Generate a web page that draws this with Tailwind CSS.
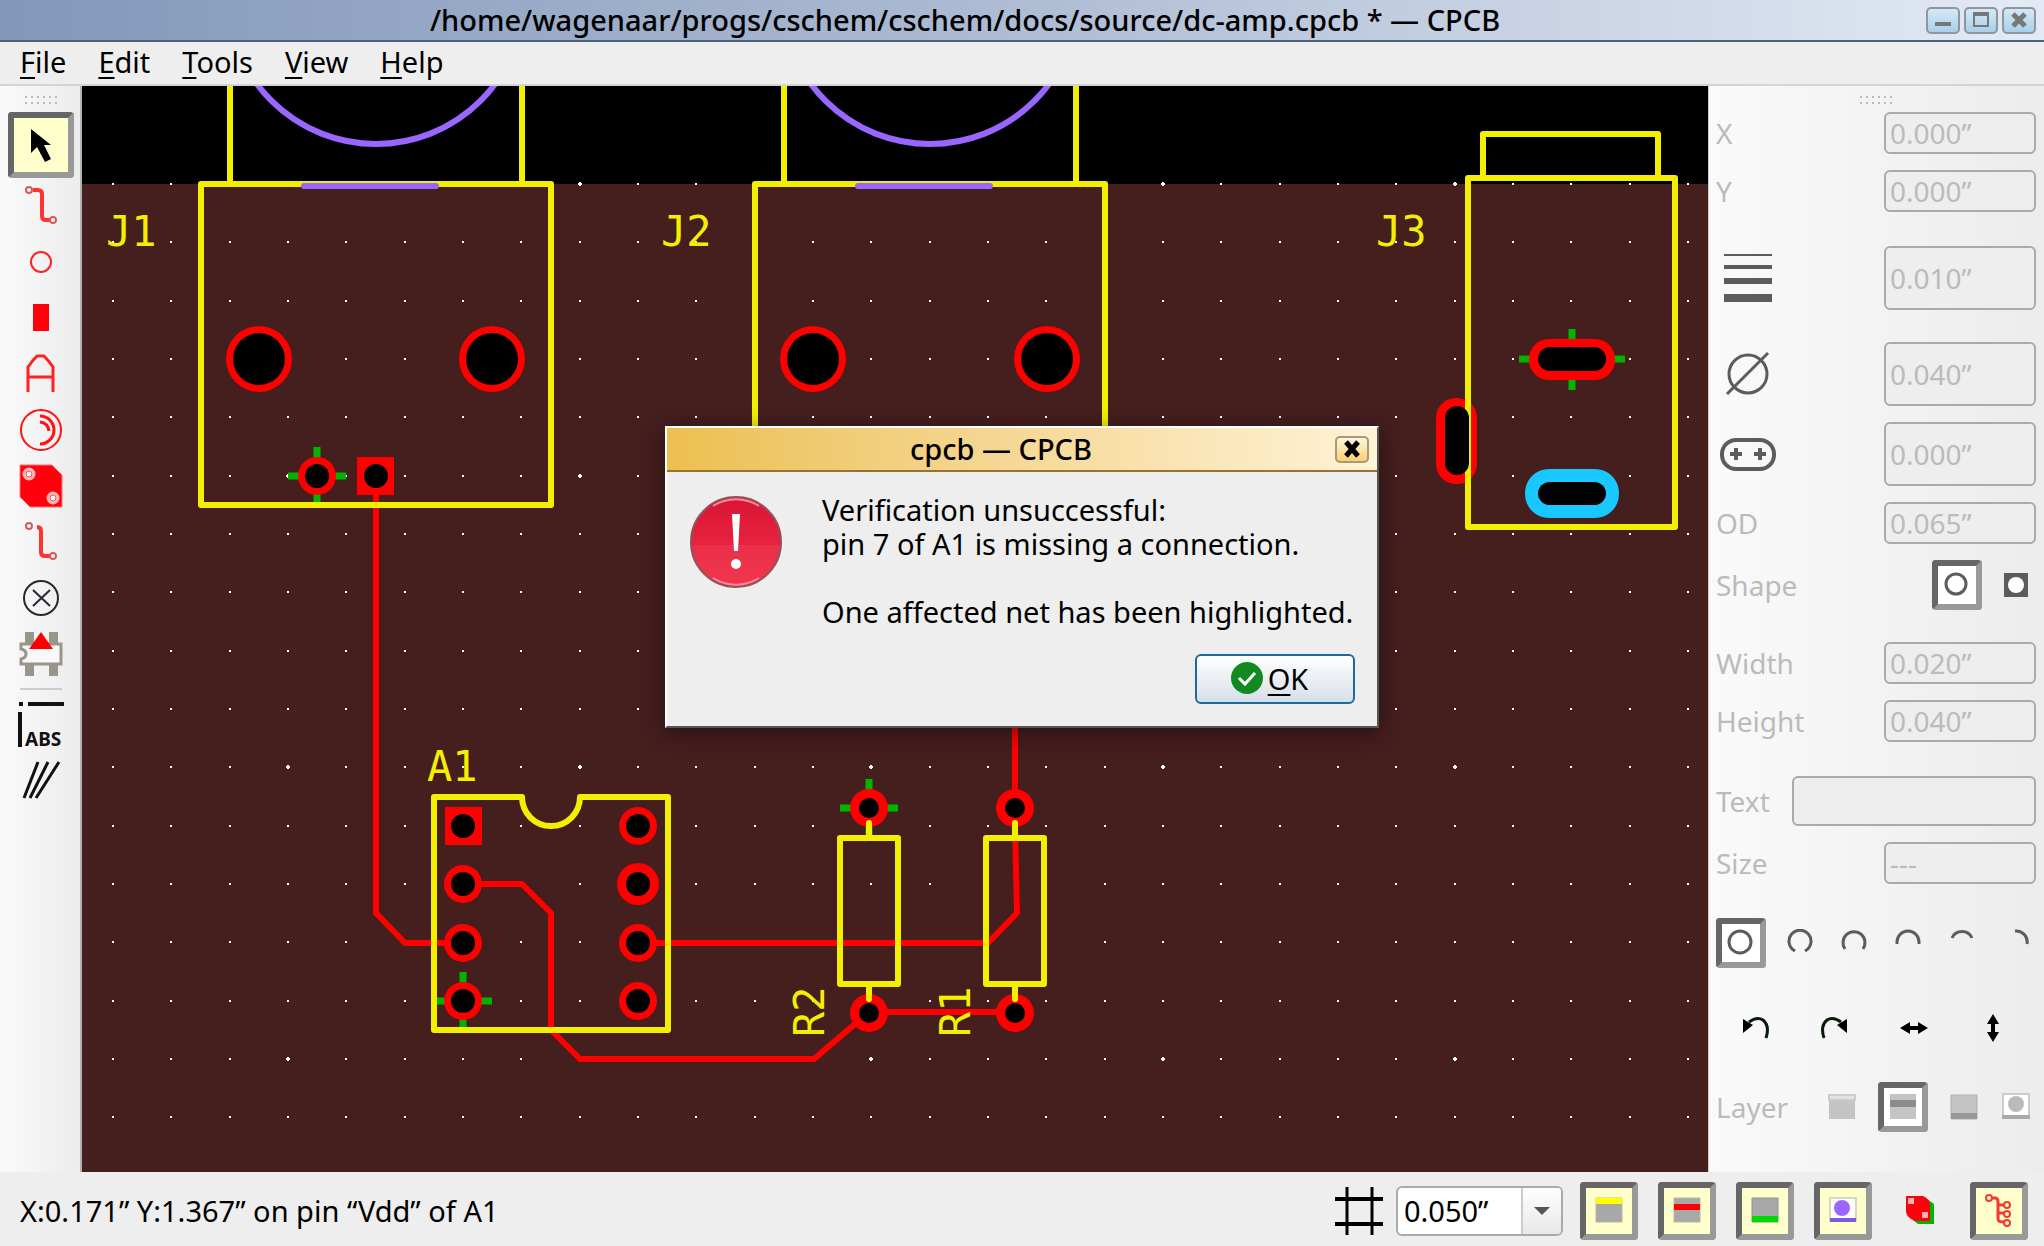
<!DOCTYPE html>
<html lang="en">
<head>
<meta charset="utf-8">
<title>dc-amp.cpcb * — CPCB</title>
<script src="https://cdn.jsdelivr.net/npm/@tailwindcss/browser@4"></script>
</head>
<body class="relative flex h-screen flex-col overflow-hidden bg-[#eeeeee] font-['Noto_Sans',sans-serif] text-[29px] leading-[34px] text-black">

<!-- Title bar -->
<header class="relative flex h-[42px] shrink-0 items-center justify-end gap-1 border-b-2 border-[#4f6078] bg-linear-to-r from-[#8298b9] via-[#aebcd4] to-[#e4eaf5] pr-2">
  <h1 class="flex-1 pb-px pl-2 text-center font-medium whitespace-nowrap">/home/wagenaar/progs/cschem/cschem/docs/source/dc-amp.cpcb * — CPCB</h1>
  <button aria-label="Minimize" class="flex h-[27px] w-[34px] items-center justify-center rounded-[5px] border-2 border-[#8f979e] bg-linear-to-b from-[#d4e9f6] to-[#a9cfe9]"><svg width="20" height="18"><path d="M2 13h16" stroke="#777" stroke-width="4"/></svg></button>
  <button aria-label="Maximize" class="flex h-[27px] w-[34px] items-center justify-center rounded-[5px] border-2 border-[#8f979e] bg-linear-to-b from-[#d4e9f6] to-[#a9cfe9]"><svg width="20" height="18"><path d="M3 3h14v12H3z" fill="none" stroke="#777" stroke-width="2"/><path d="M2 3h16" stroke="#777" stroke-width="4"/></svg></button>
  <button aria-label="Close" class="flex h-[27px] w-[34px] items-center justify-center rounded-[5px] border-2 border-[#8f979e] bg-linear-to-b from-[#d4e9f6] to-[#a9cfe9]"><svg width="20" height="18"><path d="M4 3l12 12M16 3L4 15" stroke="#777" stroke-width="5"/></svg></button>
</header>

<!-- Menu bar -->
<nav class="flex h-[44px] shrink-0 items-center gap-8 border-b-2 border-[#d4d4d4] px-5 pb-[2px]">
  <a href="#file" class="underline-offset-4"><span class="underline decoration-2">F</span>ile</a>
  <a href="#edit" class="underline-offset-4"><span class="underline decoration-2">E</span>dit</a>
  <a href="#tools" class="underline-offset-4"><span class="underline decoration-2">T</span>ools</a>
  <a href="#view" class="underline-offset-4"><span class="underline decoration-2">V</span>iew</a>
  <a href="#help" class="underline-offset-4"><span class="underline decoration-2">H</span>elp</a>
</nav>

<div class="flex min-h-0 flex-1">

  <!-- Tool palette -->
  <aside class="flex w-[82px] shrink-0 flex-col items-center border-r-2 border-[#b4b4b4] bg-linear-to-r from-[#fafafa] to-[#ececec] pt-[10px] pl-px">
    <svg width="34" height="10" class="mb-[6px] shrink-0" fill="none" stroke="#bbb" stroke-width="2" stroke-dasharray="2 4"><path d="M1 1h32M1 7h32"/></svg>
    <button aria-label="Select" class="flex h-[66px] w-[66px] shrink-0 items-center justify-center rounded-[4px] border-6 border-t-[#666] border-r-[#999] border-b-[#999] border-l-[#666] bg-[#ffffcc]">
      <svg width="44" height="44"><path d="M12 6V30L18 24L26 39L32 36L25 22H32Z" fill="#000"/></svg>
    </button>
    <button aria-label="Trace" class="flex h-14 w-[66px] shrink-0 items-center justify-center"><svg width="44" height="44" fill="none"><path d="M14 6h5q4 0 4 4v22q0 4 4 4h4" stroke="#f33" stroke-width="4"/><circle cx="10" cy="6" r="3" stroke="#d06060" stroke-width="2"/><circle cx="34" cy="36" r="3" stroke="#d06060" stroke-width="2"/></svg></button>
    <button aria-label="Hole" class="flex h-14 w-[66px] shrink-0 items-center justify-center"><svg width="44" height="44"><circle cx="22" cy="22" r="10" fill="none" stroke="#f22" stroke-width="2"/></svg></button>
    <button aria-label="Pad" class="flex h-14 w-[66px] shrink-0 items-center justify-center"><svg width="44" height="44"><path d="M14 8h16v27H14z" fill="#ff000c"/></svg></button>
    <button aria-label="Text" class="flex h-14 w-[66px] shrink-0 items-center justify-center"><svg width="44" height="44"><path d="M9 40V15Q13 9 18 4H25Q30 9 34 15V40M9 25H34" fill="none" stroke="#f22" stroke-width="3"/></svg></button>
    <button aria-label="Arc" class="flex h-14 w-[66px] shrink-0 items-center justify-center"><svg width="44" height="44" fill="none" stroke="#f11" stroke-width="3"><circle cx="22" cy="22" r="20" stroke-width="2"/><path d="M21 8a14 14 0 0 1 0 28M21 14q8 1 9 9"/></svg></button>
    <button aria-label="Plane" class="flex h-14 w-[66px] shrink-0 items-center justify-center"><svg width="44" height="44"><path d="M1 1H33L43 11V43H11L1 33Z" fill="#ff000c" stroke="#f77" stroke-width="1"/><g fill="#fff" stroke="#ffb4b4" stroke-width="3"><circle cx="10" cy="10" r="5"/><circle cx="34" cy="34" r="5"/></g><g fill="#fff" stroke="#f44" stroke-width="1"><circle cx="10" cy="10" r="3"/><circle cx="34" cy="34" r="3"/></g></svg></button>
    <button aria-label="Pick up trace" class="flex h-14 w-[66px] shrink-0 items-center justify-center"><svg width="44" height="44" fill="none"><path d="M18 7q4 0 4 4v21q0 4 4 4h5" stroke="#f33" stroke-width="4"/><circle cx="10" cy="6" r="3" stroke="#d06060" stroke-width="2"/><circle cx="34" cy="36" r="3" stroke="#d06060" stroke-width="2"/></svg></button>
    <button aria-label="Not connected" class="flex h-14 w-[66px] shrink-0 items-center justify-center"><svg width="44" height="44" fill="none" stroke="#2c2630" stroke-width="2"><circle cx="22" cy="22" r="17"/><path d="M14 14l17 16M31 14L14 30"/></svg></button>
    <button aria-label="Place component" class="flex h-14 w-[66px] shrink-0 items-center justify-center"><svg width="44" height="44"><path d="M6 0h9v11H6zM30 0h9v11h-9zM6 33h9v11H6zM30 33h9v11h-9z" fill="#98958b"/><path d="M2 12H42V32H2V27Q7 26 7 22T2 17Z" fill="#f8f8f8" stroke="#98958b" stroke-width="3"/><path d="M22 0L34 17H10Z" fill="#f00"/></svg></button>
    <hr class="my-[6px] h-[2px] w-[42px] shrink-0 border-0 bg-[#ccc]">
    <button aria-label="Absolute coordinates" class="flex h-14 w-[66px] shrink-0 items-center justify-center"><svg width="54" height="48"><path d="M5 4H9M14 4H50M6 12V47" stroke="#111" stroke-width="4"/><text x="11" y="46" font-size="19" font-weight="700" fill="#111">ABS</text></svg></button>
    <button aria-label="Angle" class="flex h-14 w-[66px] shrink-0 items-center justify-center"><svg width="44" height="44"><path d="M5 40L19 4M11 40L29 4M17 40L40 4" stroke="#111" stroke-width="3"/></svg></button>
  </aside>

  <!-- Board -->
  <main class="min-w-0 flex-1 bg-[#451e1e]">
    <svg class="block h-full w-full" viewBox="82 86 1626 1086" preserveAspectRatio="xMinYMin slice" fill="none">
      <rect x="82" y="86" width="1626" height="98" fill="#000"/>
      <g id="grid" fill="#fff" shape-rendering="crispEdges"></g>
      <g stroke="#00b400" stroke-width="7">
        <path d="M288 476h58M317 447v58M434 1001h58M463 972v58M840 808h58M869 779v58M1519 359h106M1572 329v61"/>
      </g>
      <g stroke="#f00" stroke-width="6" stroke-linejoin="round">
        <path d="M376 476V913L405 943H463"/>
        <path d="M463 884H522L551 913V1030L580 1059H814L869 1012H1015"/>
        <path d="M638 943H988L1017 913L1015 826V600"/>
      </g>
      <g fill="#f00">
        <circle cx="259" cy="359" r="33"/><circle cx="492" cy="359" r="33"/>
        <circle cx="813" cy="359" r="33"/><circle cx="1047" cy="359" r="33"/>
        <circle cx="317" cy="476" r="19"/><rect x="357" y="457" width="37" height="38"/>
        <rect x="445" y="807" width="37" height="38"/>
        <circle cx="463" cy="884" r="19"/><circle cx="463" cy="943" r="19"/><circle cx="463" cy="1001" r="19"/>
        <circle cx="638" cy="826" r="19"/><circle cx="638" cy="884" r="21"/><circle cx="638" cy="943" r="19"/><circle cx="638" cy="1001" r="19"/>
        <circle cx="869" cy="808" r="19"/><circle cx="869" cy="1013" r="19"/><circle cx="1015" cy="808" r="19"/><circle cx="1015" cy="1013" r="19"/>
        <rect x="1529" y="339" width="86" height="41" rx="20"/>
        <rect x="1436" y="398" width="41" height="86" rx="20"/>
        <rect x="1525" y="469" width="94" height="49" rx="24" fill="#19c8ff"/>
      </g>
      <g stroke="#f2f000" stroke-width="6" stroke-linejoin="round" stroke-linecap="round">
        <path d="M230 80V184M522 80V184M201 184H551V505H201Z"/>
        <path d="M784 80V184M1076 80V184M755 184H1105V505H755Z"/>
        <path d="M1483 178V134H1658V178M1468 178H1675V527H1468Z"/>
        <path d="M434 797H522A29 29 0 0 0 580 797H668V1030H434Z"/>
        <path d="M840 838H898V984H840ZM986 838H1044V984H986Z"/>
        <path d="M869 823V838M869 984V999M1015 823V838M1015 984V999"/>
      </g>
      <g fill="#000">
        <circle cx="259" cy="359" r="26"/><circle cx="492" cy="359" r="26"/>
        <circle cx="813" cy="359" r="26"/><circle cx="1047" cy="359" r="26"/>
        <circle cx="317" cy="476" r="12"/><circle cx="376" cy="476" r="12"/>
        <circle cx="463" cy="826" r="12"/><circle cx="463" cy="884" r="12"/><circle cx="463" cy="943" r="12"/><circle cx="463" cy="1001" r="12"/>
        <circle cx="638" cy="826" r="12"/><circle cx="638" cy="884" r="12"/><circle cx="638" cy="943" r="12"/><circle cx="638" cy="1001" r="12"/>
        <circle cx="869" cy="808" r="10"/><circle cx="869" cy="1013" r="10"/><circle cx="1015" cy="808" r="10"/><circle cx="1015" cy="1013" r="10"/>
        <rect x="1538" y="347" width="68" height="24" rx="12"/>
        <rect x="1445" y="406" width="24" height="69" rx="12"/>
        <rect x="1538" y="482" width="68" height="23" rx="12"/>
      </g>
      <g stroke="#9966ff" stroke-width="6" stroke-linecap="round">
        <circle cx="376" cy="-4" r="148"/><circle cx="930" cy="-4" r="148"/>
        <path d="M304 186H436M858 186H990"/>
      </g>
      <g fill="#f2f000" font-family="'DejaVu Sans Mono',monospace" font-size="42">
        <text x="106" y="246">J1</text>
        <text x="661" y="246">J2</text>
        <text x="1376" y="246">J3</text>
        <text x="427" y="781">A1</text>
        <text transform="translate(824 1037) rotate(-90)">R2</text>
        <text transform="translate(970 1037) rotate(-90)">R1</text>
      </g>
    </svg>
  </main>

  <!-- Properties -->
  <aside class="flex w-[336px] shrink-0 flex-col gap-4 border-l border-[#ccc] bg-linear-to-r from-[#fafafa] to-[#ececec] pt-[10px] pr-2 pl-[7px] text-[28px] text-[#bbb]">
    <svg width="34" height="10" class="-mb-[10px] shrink-0 self-center" fill="none" stroke="#bbb" stroke-width="2" stroke-dasharray="2 4"><path d="M1 1h32M1 7h32"/></svg>
    <div class="flex items-center justify-between"><label for="x">X</label><input id="x" disabled value="0.000”" class="h-[42px] w-[152px] rounded-md border-2 border-[#aaa] bg-[#eee] pl-1"></div>
    <div class="flex items-center justify-between"><label for="y">Y</label><input id="y" disabled value="0.000”" class="h-[42px] w-[152px] rounded-md border-2 border-[#aaa] bg-[#eee] pl-1"></div>
    <div class="mt-[18px] flex items-center justify-between">
      <label for="lw" aria-label="Line width" class="pl-1"><svg width="56" height="56" stroke="#5c5c5c"><path d="M4 5H52" stroke-width="2"/><path d="M4 17H52" stroke-width="4"/><path d="M4 31H52" stroke-width="6"/><path d="M4 48H52" stroke-width="8"/></svg></label>
      <input id="lw" disabled value="0.010”" class="h-16 w-[152px] rounded-md border-2 border-[#aaa] bg-[#eee] pl-1"></div>
    <div class="mt-4 flex items-center justify-between">
      <label for="id" aria-label="Inner diameter" class="pl-1"><svg width="56" height="56" fill="none" stroke="#5c5c5c" stroke-width="3"><circle cx="28" cy="28" r="19"/><path d="M7 48L48 7"/></svg></label>
      <input id="id" disabled value="0.040”" class="h-16 w-[152px] rounded-md border-2 border-[#aaa] bg-[#eee] pl-1"></div>
    <div class="flex items-center justify-between">
      <label for="sl" aria-label="Slot length" class="pl-1"><svg width="56" height="56" fill="none" stroke="#5c5c5c"><rect x="2" y="14" width="52" height="29" rx="14" stroke-width="4"/><path d="M10 28H22M16 22V34M34 28H46M40 22V34" stroke-width="4"/></svg></label>
      <input id="sl" disabled value="0.000”" class="h-16 w-[152px] rounded-md border-2 border-[#aaa] bg-[#eee] pl-1"></div>
    <div class="flex items-center justify-between"><label for="od">OD</label><input id="od" disabled value="0.065”" class="h-[42px] w-[152px] rounded-md border-2 border-[#aaa] bg-[#eee] pl-1"></div>
    <div class="flex items-center"><span class="flex-1">Shape</span>
      <button aria-label="Round" class="flex h-[50px] w-[50px] items-center justify-center rounded-[4px] border-6 border-t-[#666] border-r-[#999] border-b-[#999] border-l-[#666] bg-white"><svg width="28" height="28"><circle cx="13" cy="13" r="10" fill="none" stroke="#5c5c5c" stroke-width="3"/></svg></button>
      <button aria-label="Square" class="ml-[14px] flex h-[50px] w-10 items-center justify-center"><svg width="28" height="28"><path d="M2 2H26V26H2Z" fill="#5c5c5c"/><circle cx="14" cy="14" r="8" fill="#fff"/></svg></button>
    </div>
    <div class="mt-4 flex items-center justify-between"><label for="w">Width</label><input id="w" disabled value="0.020”" class="h-[42px] w-[152px] rounded-md border-2 border-[#aaa] bg-[#eee] pl-1"></div>
    <div class="flex items-center justify-between"><label for="h">Height</label><input id="h" disabled value="0.040”" class="h-[42px] w-[152px] rounded-md border-2 border-[#aaa] bg-[#eee] pl-1"></div>
    <div class="mt-[18px] flex items-center justify-between"><label for="t">Text</label><input id="t" disabled class="h-[50px] w-[244px] rounded-md border-2 border-[#aaa] bg-[#eee] pl-1"></div>
    <div class="flex items-center justify-between"><label for="s">Size</label><input id="s" disabled value="---" class="h-[42px] w-[152px] rounded-md border-2 border-[#aaa] bg-[#eee] pl-1"></div>
    <div class="mt-[18px] flex items-center gap-[14px]">
      <button aria-label="Full circle" class="flex h-[50px] w-[50px] items-center justify-center rounded-[4px] border-6 border-t-[#666] border-r-[#999] border-b-[#999] border-l-[#666] bg-white"><svg width="28" height="28"><circle cx="13" cy="13" r="11" fill="none" stroke="#5c5c5c" stroke-width="3"/></svg></button>
      <button aria-label="300 degrees"><svg width="40" height="28" fill="none" stroke="#5c5c5c" stroke-width="3"><path d="M15 22A11 11 0 1 1 25 22"/></svg></button>
      <button aria-label="240 degrees"><svg width="40" height="28" fill="none" stroke="#5c5c5c" stroke-width="3"><path d="M11 20A11 11 0 1 1 29 20"/></svg></button>
      <button aria-label="180 degrees"><svg width="40" height="28" fill="none" stroke="#5c5c5c" stroke-width="3"><path d="M9 15V13A11 11 0 0 1 31 13V15"/></svg></button>
      <button aria-label="120 degrees"><svg width="40" height="28" fill="none" stroke="#5c5c5c" stroke-width="3"><path d="M10 9A11 11 0 0 1 30 9"/></svg></button>
      <button aria-label="90 degrees"><svg width="40" height="28" fill="none" stroke="#5c5c5c" stroke-width="3"><path d="M19 2A11 11 0 0 1 31 15"/></svg></button>
    </div>
    <div class="mt-[18px] grid h-[52px] grid-cols-4 items-center justify-items-center pr-1">
      <button aria-label="Rotate left"><svg width="32" height="32" fill="none" stroke="#0a1a0a" stroke-width="3"><path d="M9 10Q17 4 23 8Q30 14 26 26"/><path d="M3 7L13 13L3 21Z" fill="#000" stroke="none"/></svg></button>
      <button aria-label="Rotate right"><svg width="32" height="32" fill="none" stroke="#0a1a0a" stroke-width="3"><path d="M22 10Q14 4 8 8Q1 14 5 26"/><path d="M28 7L18 13L28 21Z" fill="#000" stroke="none"/></svg></button>
      <button aria-label="Flip horizontally"><svg width="32" height="32"><path d="M2 16L12 10V14H20V10L30 16L20 22V18H12V22Z"/></svg></button>
      <button aria-label="Flip vertically"><svg width="32" height="32"><path d="M16 2L22 12H18V20H22L16 30L10 20H14V12H10Z"/></svg></button>
    </div>
    <div class="mt-3 flex items-center"><span class="flex-1">Layer</span>
      <button aria-label="Silk" class="mr-5"><svg width="32" height="32"><path d="M3 3H29V28H3Z" fill="#c4c4c4"/><path d="M3 4H29V9H3Z" fill="#e2e2e2" stroke="#ccc" stroke-width="2"/></svg></button>
      <button aria-label="Top" class="mr-5 flex h-[50px] w-[50px] items-center justify-center rounded-[4px] border-6 border-t-[#666] border-r-[#999] border-b-[#999] border-l-[#666] bg-white"><svg width="32" height="32"><path d="M3 3H29V28H3Z" fill="#c4c4c4"/><path d="M3 9H29V16H3Z" fill="#8c8c8c"/></svg></button>
      <button aria-label="Bottom" class="mr-5"><svg width="32" height="32"><path d="M3 4H29V28H3Z" fill="#c4c4c4" stroke="#b0b0b0"/><path d="M3 22H29V28H3Z" fill="#999"/></svg></button>
      <button aria-label="Panel" class="mr-1"><svg width="32" height="32"><path d="M3 3H29V27H3Z" fill="#fff" stroke="#ccc" stroke-width="2"/><circle cx="16" cy="13" r="8" fill="#bbb"/><path d="M2 26H30" stroke="#aaa" stroke-width="4"/></svg></button>
    </div>
  </aside>
</div>

<!-- Status bar -->
<footer class="flex h-[74px] shrink-0 items-center pt-1 pr-4 pl-5">
  <span class="flex-1">X:0.171” Y:1.367” on pin “Vdd” of A1</span>
  <label for="grid-size" aria-label="Grid spacing" class="mr-[13px]"><svg width="48" height="48" stroke="#000" stroke-width="3"><path d="M12 0V48M37 0V48"/><path d="M0 12H48M0 37H48" stroke-width="4"/></svg></label>
  <div class="relative mr-[17px]">
    <select id="grid-size" class="block h-[50px] w-[167px] appearance-none rounded-md border-2 border-[#aaa] bg-white pl-[6px]"><option>0.050”</option></select>
    <span class="pointer-events-none absolute inset-y-[2px] right-[2px] flex w-10 items-center justify-center rounded-r-sm border-l-2 border-[#ccc] bg-linear-to-b from-white to-[#e8e8e8]"><svg width="16" height="10"><path d="M0 1H16L8 9Z" fill="#555"/></svg></span>
  </div>
  <div class="flex gap-5">
    <button aria-label="Show silk" class="flex h-[58px] w-[58px] items-center justify-center rounded-[4px] border-6 border-t-[#666] border-r-[#999] border-b-[#999] border-l-[#666] bg-[#ffffcc]"><svg width="32" height="32"><path d="M3 3H29V27H3Z" fill="#a8a8a8" stroke="#b8b8a0"/><path d="M3 3H29V9H3Z" fill="#ff0"/></svg></button>
    <button aria-label="Show top" class="flex h-[58px] w-[58px] items-center justify-center rounded-[4px] border-6 border-t-[#666] border-r-[#999] border-b-[#999] border-l-[#666] bg-[#ffffcc]"><svg width="32" height="32"><path d="M3 3H29V27H3Z" fill="#a8a8a8" stroke="#b8b8a0"/><path d="M3 9H29V15H3Z" fill="#f00"/></svg></button>
    <button aria-label="Show bottom" class="flex h-[58px] w-[58px] items-center justify-center rounded-[4px] border-6 border-t-[#666] border-r-[#999] border-b-[#999] border-l-[#666] bg-[#ffffcc]"><svg width="32" height="32"><path d="M3 3H29V27H3Z" fill="#a8a8a8" stroke="#909090"/><path d="M3 21H29V27H3Z" fill="#00d800"/></svg></button>
    <button aria-label="Show panel" class="flex h-[58px] w-[58px] items-center justify-center rounded-[4px] border-6 border-t-[#666] border-r-[#999] border-b-[#999] border-l-[#666] bg-[#ffffcc]"><svg width="32" height="32"><path d="M3 3H29V26H3Z" fill="#fff" stroke="#d8d8c0" stroke-width="2"/><circle cx="15" cy="13" r="8" fill="#9966ff"/><path d="M3 25H29" stroke="#8058d8" stroke-width="4"/></svg></button>
    <button aria-label="Show planes" class="flex h-[58px] w-[58px] items-center justify-center"><svg width="32" height="32"><path d="M22 4L29 9V29H13L8 25Z" fill="#00b400"/><path d="M1 1H18Q25 4 25 10V26H10Q2 23 1 17Z" fill="#ff000c"/><path d="M3 3h6v6H3zM17 17h6v6h-6z" fill="#ffb0b0"/></svg></button>
    <button aria-label="Show nets" class="flex h-[58px] w-[58px] items-center justify-center rounded-[4px] border-6 border-t-[#666] border-r-[#999] border-b-[#999] border-l-[#666] bg-[#ffffcc]"><svg width="32" height="36" fill="none" stroke="#f43a30" stroke-width="2"><circle cx="6" cy="5" r="3"/><circle cx="24" cy="12" r="3"/><circle cx="24" cy="21" r="3"/><circle cx="24" cy="30" r="3"/><path d="M9 5H12Q15 5 15 9V26Q15 29 21 29M15 20H21M15 12H21" stroke-width="3"/></svg></button>
  </div>
</footer>

<!-- Message dialog -->
<div role="alertdialog" aria-labelledby="dlg-title" class="absolute top-[426px] left-1/2 w-[714px] -translate-x-1/2 border-2 border-t-white border-r-[#555] border-b-[#555] border-l-white bg-[#eeeeee] shadow-[0_4px_20px_rgba(0,0,0,0.45)]">
  <div class="flex h-11 items-center border-b-2 border-[#94742f] bg-linear-to-r from-[#ecbf4e] to-[#fff2d6] pr-2">
    <h2 id="dlg-title" class="flex-1 text-center font-medium">cpcb — CPCB</h2>
    <button aria-label="Close dialog" class="flex h-[27px] w-[34px] items-center justify-center rounded-[5px] border-2 border-[#a59a7c] bg-linear-to-b from-[#fff6dd] to-[#fbcf6a]"><svg width="20" height="18"><path d="M4 2l12 14M16 2L4 16" stroke="#000" stroke-width="5"/></svg></button>
  </div>
  <div class="flex items-start gap-[39px] pt-[21px] pr-6 pl-[22px]">
    <svg width="94" height="96" class="shrink-0">
      <defs><linearGradient id="alert" x1="0" y1="0" x2="0" y2="1"><stop offset="0" stop-color="#d91535"/><stop offset=".53" stop-color="#e8233f"/><stop offset=".54" stop-color="#ea3048"/><stop offset="1" stop-color="#f0374e"/></linearGradient></defs>
      <circle cx="47" cy="49" r="45" fill="url(#alert)" stroke="#94505c" stroke-width="2"/>
      <path d="M24 13A43 43 0 0 1 70 13M24 85A43 43 0 0 0 70 85" fill="none" stroke="#f58a9a" stroke-width="2"/>
      <path d="M43 21H51L49 58H45Z" fill="#fff"/><circle cx="47" cy="71" r="5" fill="#fff"/>
    </svg>
    <p class="whitespace-nowrap">Verification unsuccessful:<br>pin 7 of A1 is missing a connection.<br><br>One affected net has been highlighted.</p>
  </div>
  <div class="flex justify-end pt-[25px] pr-[22px] pb-[22px]">
    <button class="flex h-[50px] w-[160px] items-center justify-center gap-1 rounded-md border-2 border-[#1f6a9c] bg-linear-to-b from-white to-[#d6dfe8] pr-3">
      <svg width="34" height="34"><circle cx="17" cy="16" r="16" fill="#128a22"/><path d="M9 16L15 22L25 11" fill="none" stroke="#fff" stroke-width="3"/></svg>
      <span class="underline-offset-4"><span class="underline decoration-2">O</span>K</span>
    </button>
  </div>
</div>

<script>
  // Grid dots: every 0.050", with a larger mark on every fifth one
  const grid = document.getElementById('grid');
  let dots = '';
  for (let i = 0; i < 28; i++) {
    for (let j = 0; j < 17; j++) {
      const x = Math.round(113 + i * 58.33), y = Math.round(184 + j * 58.33);
      dots += `<rect x="${x - 1}" y="${y - 1}" width="2" height="2"/>`;
      if (i % 5 === 3 && j % 5 === 0) {
        dots += `<rect x="${x - 2}" y="${y - 1}" width="4" height="2"/><rect x="${x - 1}" y="${y - 2}" width="2" height="4"/>`;
      }
    }
  }
  grid.innerHTML = dots;
</script>
</body>
</html>
